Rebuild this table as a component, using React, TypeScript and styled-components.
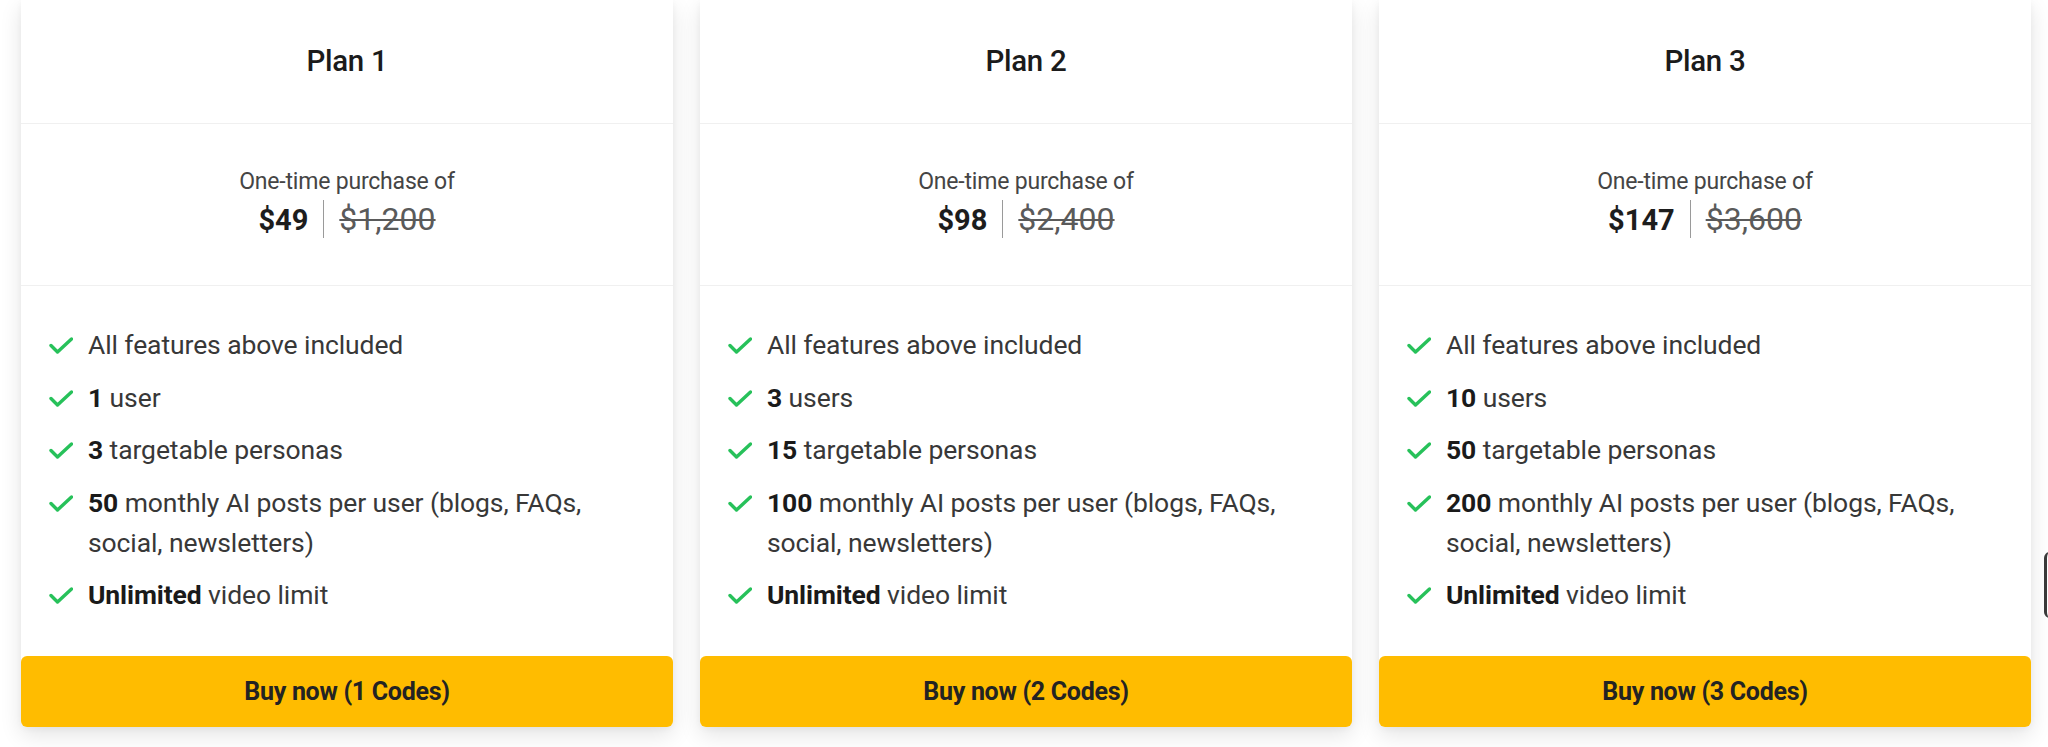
import React from "react";
import styled, { createGlobalStyle } from "styled-components";

const GlobalStyle = createGlobalStyle`
  html, body {
    margin: 0;
    padding: 0;
    background: #ffffff;
  }
  body {
    font-family: Roboto, "Noto Sans", Arial, sans-serif;
    overflow: hidden;
  }
  * { box-sizing: border-box; }
`;

const Page = styled.div`
  position: relative;
  width: 2048px;
  height: 747px;
  overflow: hidden;
  background: #ffffff;
`;

const Row = styled.div`
  display: flex;
  gap: 27px;
  padding-left: 21px;
  align-items: flex-start;
`;

const Card = styled.div`
  width: 652px;
  flex: 0 0 652px;
  background: #ffffff;
  border-radius: 0 0 6px 6px;
  box-shadow: 0 8px 22px rgba(0, 0, 0, 0.11), 0 2px 6px rgba(0, 0, 0, 0.04);
  display: flex;
  flex-direction: column;
`;

const Header = styled.div`
  height: 124px;
  border-bottom: 1px solid #f0f0f0;
  display: flex;
  align-items: center;
  justify-content: center;
  padding-bottom: 1px;
`;

const Title = styled.h2`
  margin: 0;
  font-size: 29.5px;
  font-weight: 500;
  color: #1b1b1b;
  letter-spacing: -0.3px;
`;

const PriceBlock = styled.div`
  border-bottom: 1px solid #f0f0f0;
  padding: 44px 0 47px;
  display: flex;
  flex-direction: column;
  align-items: center;
  gap: 5px;
`;

const PriceLabel = styled.div`
  font-size: 23px;
  line-height: 27px;
  color: #454545;
  letter-spacing: -0.2px;
`;

const PriceRow = styled.div`
  display: flex;
  align-items: center;
  gap: 15px;
  height: 38px;
`;

const Price = styled.span`
  font-size: 29px;
  line-height: 38px;
  font-weight: 700;
  color: #1d1d1d;
  position: relative;
  top: 1px;
`;

const Separator = styled.span`
  width: 1px;
  height: 38px;
  background: #9a9a9a;
`;

const OldPrice = styled.span`
  font-size: 32px;
  line-height: 38px;
  color: #5a5a5a;
  text-decoration: line-through;
  text-decoration-thickness: 2px;
  text-decoration-color: #5a5a5a;
`;

const Features = styled.ul`
  list-style: none;
  margin: 0;
  padding: 39px 28px 41px;
  display: flex;
  flex-direction: column;
  gap: 12.5px;
`;

const Feature = styled.li`
  display: flex;
  align-items: flex-start;
  gap: 15px;
  font-size: 26.5px;
  line-height: 40px;
  color: #383838;
  letter-spacing: -0.1px;

  b {
    font-weight: 700;
    color: #1a1a1a;
  }
`;

const CheckWrap = styled.span`
  flex: 0 0 24px;
  height: 40px;
  display: flex;
  align-items: center;
  padding-top: 1px;
`;

const BuyButton = styled.button`
  height: 71px;
  width: 100%;
  border: none;
  border-radius: 6px;
  background: #ffbc00;
  color: #232323;
  font-family: Roboto, "Noto Sans", Arial, sans-serif;
  font-size: 25px;
  font-weight: 700;
  letter-spacing: -0.3px;
  cursor: pointer;
  display: flex;
  align-items: center;
  justify-content: center;
`;

const NextPeek = styled.div`
  position: absolute;
  left: 2044px;
  top: 552px;
  width: 30px;
  height: 66px;
  border-left: 3px solid #3a3a3a;
  border-radius: 6px 0 0 6px;
  background: #ffffff;
`;

const Check: React.FC = () => (
  <svg width="24" height="17" viewBox="0 0 24 17" fill="none">
    <polyline
      points="2,8.5 8.5,15 22.5,2"
      stroke="#27c15a"
      strokeWidth="3.4"
      strokeLinecap="round"
      strokeLinejoin="round"
    />
  </svg>
);

type Plan = {
  name: string;
  price: string;
  old: string;
  users: string;
  userWord: string;
  personas: string;
  posts: string;
  codes: number;
};

const plans: Plan[] = [
  { name: "Plan 1", price: "$49", old: "$1,200", users: "1", userWord: "user", personas: "3", posts: "50", codes: 1 },
  { name: "Plan 2", price: "$98", old: "$2,400", users: "3", userWord: "users", personas: "15", posts: "100", codes: 2 },
  { name: "Plan 3", price: "$147", old: "$3,600", users: "10", userWord: "users", personas: "50", posts: "200", codes: 3 },
];

const PlanCard: React.FC<{ plan: Plan }> = ({ plan }) => (
  <Card>
    <Header>
      <Title>{plan.name}</Title>
    </Header>
    <PriceBlock>
      <PriceLabel>One-time purchase of</PriceLabel>
      <PriceRow>
        <Price>{plan.price}</Price>
        <Separator />
        <OldPrice>{plan.old}</OldPrice>
      </PriceRow>
    </PriceBlock>
    <Features>
      <Feature>
        <CheckWrap><Check /></CheckWrap>
        <span>All features above included</span>
      </Feature>
      <Feature>
        <CheckWrap><Check /></CheckWrap>
        <span><b>{plan.users}</b> {plan.userWord}</span>
      </Feature>
      <Feature>
        <CheckWrap><Check /></CheckWrap>
        <span><b>{plan.personas}</b> targetable personas</span>
      </Feature>
      <Feature>
        <CheckWrap><Check /></CheckWrap>
        <span>
          <b>{plan.posts}</b> monthly AI posts per user (blogs, FAQs,
          <br />
          social, newsletters)
        </span>
      </Feature>
      <Feature>
        <CheckWrap><Check /></CheckWrap>
        <span><b>Unlimited</b> video limit</span>
      </Feature>
    </Features>
    <BuyButton>Buy now ({plan.codes} Codes)</BuyButton>
  </Card>
);

export default function App() {
  return (
    <Page>
      <GlobalStyle />
      <Row>
        {plans.map((p) => (
          <PlanCard key={p.name} plan={p} />
        ))}
      </Row>
      <NextPeek />
    </Page>
  );
}
